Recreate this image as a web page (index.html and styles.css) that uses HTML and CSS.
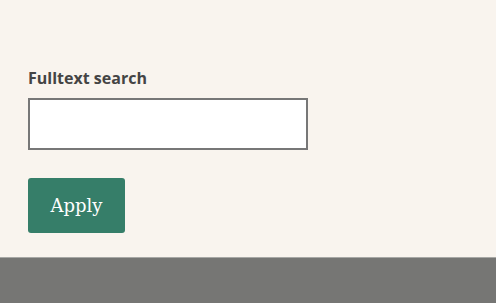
FILE: index.html
```html
<!DOCTYPE html>
<html>
<head>
<meta charset="utf-8">
<link rel="stylesheet" href="styles.css">
</head>
<body>
<main class="content">
  <form class="filter">
    <label class="label" for="q">Fulltext search</label>
    <input class="field" id="q" type="text">
    <button class="apply" type="button">Apply</button>
  </form>
</main>
<footer class="footer"></footer>
</body>
</html>
```

FILE: styles.css
```css
html, body {
  margin: 0;
  padding: 0;
  background: #f9f4ee;
}
body {
  width: 496px;
  height: 303px;
  overflow: hidden;
  display: flex;
  flex-direction: column;
}
.content {
  height: 257px;
  flex: none;
  box-sizing: border-box;
  padding: 66px 28px 0;
}
.filter {
  display: flex;
  flex-direction: column;
  align-items: flex-start;
}
.label {
  font-family: "Open Sans", sans-serif;
  font-weight: 700;
  font-size: 16px;
  line-height: 24px;
  color: #444;
}
.field {
  margin-top: 8px;
  width: 280px;
  height: 52px;
  box-sizing: border-box;
  border: 2px solid #777;
  background: #fff;
  padding: 0 10px;
  outline: none;
}
.apply {
  margin-top: 28px;
  width: 97px;
  height: 55px;
  border: none;
  border-radius: 3px;
  background: #367e69;
  color: #fff;
  font-family: "DejaVu Serif", serif;
  font-size: 18px;
  padding: 0;
}
.footer {
  flex: 1;
  background: #767674;
  border-top: 1px solid #a8a8a5;
}
```
